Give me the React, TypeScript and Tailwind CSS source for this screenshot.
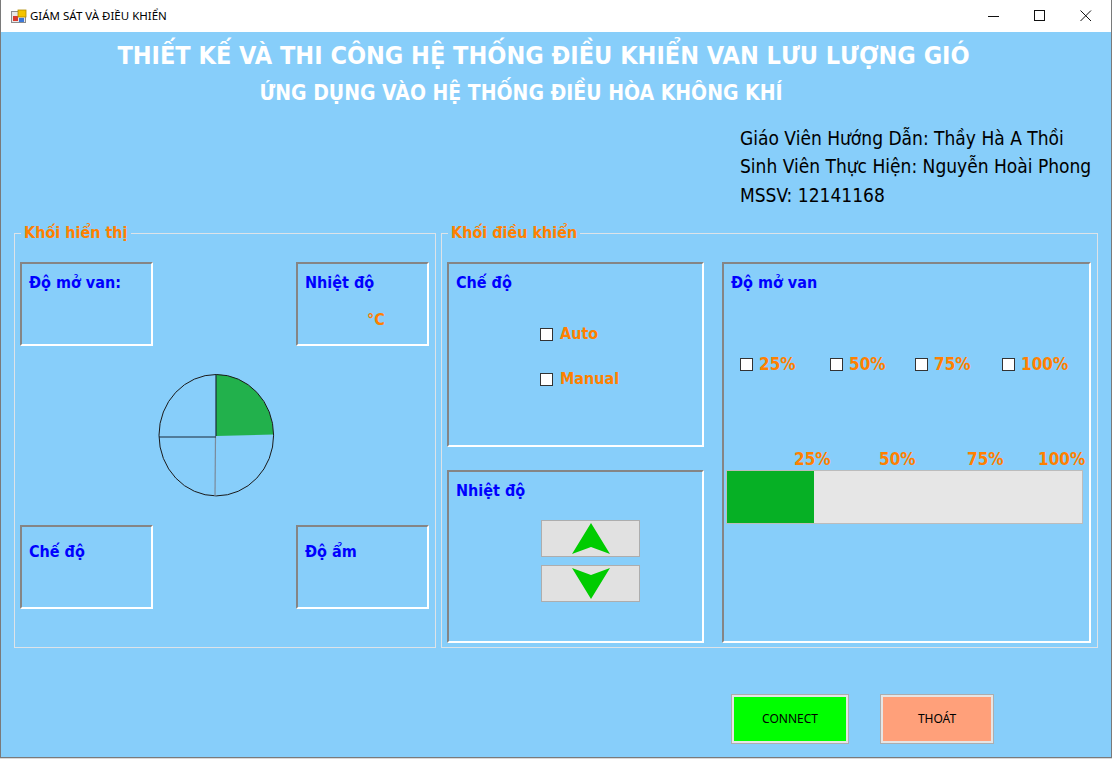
import React from "react";

const TF = "font-['DejaVu_Sans_Condensed','DejaVu_Sans',sans-serif]";

function Panel({ className = "", children }: { className?: string; children?: React.ReactNode }) {
  return (
    <div
      className={`border-2 border-t-[#858585] border-l-[#858585] border-r-white border-b-white ${className}`}
    >
      {children}
    </div>
  );
}

function Check() {
  return <div className="w-[13px] h-[13px] shrink-0 bg-white border border-[#333333]" />;
}

function BlueLabel({ children }: { children: React.ReactNode }) {
  return (
    <div className={`${TF} font-bold text-[16px] leading-[20px] text-[#0000ff] whitespace-nowrap`}>
      {children}
    </div>
  );
}

function Orange({ children, className = "" }: { children: React.ReactNode; className?: string }) {
  return (
    <span className={`${TF} font-bold text-[16px] leading-[20px] text-[#ff8000] whitespace-nowrap ${className}`}>
      {children}
    </span>
  );
}

function Pct({ children }: { children: React.ReactNode }) {
  return (
    <span className={`${TF} font-bold text-[17px] leading-[20px] text-[#ff8000] whitespace-nowrap`}>
      {children}
    </span>
  );
}

function GroupTitle({ children }: { children: React.ReactNode }) {
  return (
    <span
      className={`absolute left-[6px] top-[-11px] px-[3px] bg-[#87cefa] ${TF} font-bold text-[16px] leading-[20px] text-[#ff8000] whitespace-nowrap`}
    >
      {children}
    </span>
  );
}

export default function App() {
  return (
    <div className="w-[1112px] h-[759px] bg-[#d9d9d9] overflow-hidden">
      <div className="w-[1112px] h-[758px] flex flex-col border-x border-b border-[#7a7a7a]">
        {/* Title bar */}
        <div className="h-[32px] shrink-0 bg-white flex items-center">
          <svg className="ml-[10px]" width="16" height="16" viewBox="0 0 16 16">
            <rect x="0.5" y="3.5" width="14" height="11" fill="#e8e8e8" stroke="#8c8c8c" />
            <rect x="2" y="8" width="5" height="5" fill="#d83a2e" />
            <rect x="7" y="2" width="8" height="7" fill="#f5c400" stroke="#b08b00" strokeWidth="0.8" />
            <rect x="8" y="10" width="5" height="4" fill="#3c78d8" />
          </svg>
          <span className="ml-[3px] font-['Noto_Sans',sans-serif] text-[11.5px] text-black whitespace-nowrap">
            GIÁM SÁT VÀ ĐIỀU KHIỂN
          </span>
          <div className="ml-auto flex items-center">
            <div className="w-[46px] h-[32px] flex items-center justify-center">
              <svg width="12" height="12" viewBox="0 0 12 12">
                <line x1="0" y1="6.5" x2="11" y2="6.5" stroke="#111" strokeWidth="1" />
              </svg>
            </div>
            <div className="w-[46px] h-[32px] flex items-center justify-center">
              <svg width="12" height="12" viewBox="0 0 12 12">
                <rect x="0.5" y="0.5" width="10" height="10" fill="none" stroke="#111" strokeWidth="1" />
              </svg>
            </div>
            <div className="w-[46px] h-[32px] flex items-center justify-center mr-[2px]">
              <svg width="12" height="12" viewBox="0 0 12 12">
                <path d="M0.5 0.5 L11 11 M11 0.5 L0.5 11" stroke="#111" strokeWidth="1" />
              </svg>
            </div>
          </div>
        </div>

        {/* Body */}
        <div className="flex-1 bg-[#87cefa] flex flex-col">
          <div className={`mt-[8px] w-[1085px] h-[32px] leading-[32px] text-center ${TF} font-bold text-[25px] text-white whitespace-nowrap`}>
            THIẾT KẾ VÀ THI CÔNG HỆ THỐNG ĐIỀU KHIỂN VAN LƯU LƯỢNG GIÓ
          </div>
          <div className={`mt-[7px] w-[1040px] h-[28px] leading-[28px] text-center ${TF} font-bold text-[21px] text-white whitespace-nowrap`}>
            ỨNG DỤNG VÀO HỆ THỐNG ĐIỀU HÒA KHÔNG KHÍ
          </div>

          <div className={`mt-[17px] ml-[739px] ${TF} text-[19px] text-black whitespace-nowrap`}>
            <div className="leading-[28px]">{"Giáo Viên Hướng Dẫn: Thầy Hà A Th\u1ED3i"}</div>
            <div className="leading-[29px]">Sinh Viên Thực Hiện: Nguyễn Hoài Phong</div>
            <div className="leading-[28px]">MSSV: 12141168</div>
          </div>

          {/* Groups */}
          <div className="mt-[24px] flex">
            {/* Group 1 */}
            <div className="relative ml-[13px] w-[422px] h-[415px] border border-[#dde3e8] pl-[5px] pr-[6px] pt-[28px]">
              <GroupTitle>Khối hiển thị</GroupTitle>
              <div className="flex justify-between">
                <Panel className="w-[133px] h-[84px] pl-[7px] pt-[9px]">
                  <BlueLabel>Độ mở van:</BlueLabel>
                </Panel>
                <Panel className="w-[133px] h-[84px] pl-[7px] pt-[9px]">
                  <BlueLabel>Nhiệt độ</BlueLabel>
                  <div className="mt-[14px] ml-[62px]">
                    <Orange>°C</Orange>
                  </div>
                </Panel>
              </div>
              <svg className="block mt-[27px] ml-[137px]" width="120" height="124" viewBox="0 0 120 124">
                <path d="M59 63 L59 1.5 A57.3 60.7 0 0 1 116.3 61.5 Z" fill="#22b14c" />
                <ellipse cx="59.3" cy="62.2" rx="57.3" ry="60.7" fill="none" stroke="#1a1a1a" strokeWidth="1" />
                <line x1="59" y1="1.5" x2="59" y2="63" stroke="#1a2a3a" strokeWidth="1.2" />
                <line x1="58.5" y1="63" x2="58" y2="123" stroke="#7a8a9a" strokeWidth="1.2" />
                <line x1="2" y1="64" x2="59" y2="64" stroke="#1a2a3a" strokeWidth="1.2" />
              </svg>
              <div className="mt-[28px] flex justify-between">
                <Panel className="w-[133px] h-[84px] pl-[7px] pt-[15px]">
                  <BlueLabel>Chế độ</BlueLabel>
                </Panel>
                <Panel className="w-[133px] h-[84px] pl-[7px] pt-[15px]">
                  <BlueLabel>Độ ẩm</BlueLabel>
                </Panel>
              </div>
            </div>

            {/* Group 2 */}
            <div className="relative ml-[5px] w-[657px] h-[415px] border border-[#dde3e8] pl-[5px] pt-[28px] flex gap-[18px]">
              <GroupTitle>Khối điều khiển</GroupTitle>
              <div className="w-[257px] flex flex-col gap-[23px]">
                <Panel className="h-[185px] pl-[7px] pt-[9px]">
                  <BlueLabel>Chế độ</BlueLabel>
                  <div className="mt-[31px] ml-[84px] h-[20px] flex items-center gap-[7px]">
                    <Check />
                    <Orange>Auto</Orange>
                  </div>
                  <div className="mt-[25px] ml-[84px] h-[20px] flex items-center gap-[7px]">
                    <Check />
                    <Orange>Manual</Orange>
                  </div>
                </Panel>
                <Panel className="h-[173px] pl-[7px] pt-[9px]">
                  <BlueLabel>Nhiệt độ</BlueLabel>
                  <div className="mt-[19px] ml-[85px] w-[99px] h-[37px] bg-[#e1e1e1] border border-[#adadad]">
                    <svg className="block" width="97" height="35" viewBox="0 0 97 35">
                      <polygon points="49,2 68,33 49,26 30,33" fill="#00cc00" />
                    </svg>
                  </div>
                  <div className="mt-[8px] ml-[85px] w-[99px] h-[37px] bg-[#e1e1e1] border border-[#adadad]">
                    <svg className="block" width="97" height="35" viewBox="0 0 97 35">
                      <polygon points="30,2 49,9 68,2 49,33" fill="#00cc00" />
                    </svg>
                  </div>
                </Panel>
              </div>

              <Panel className="w-[369px] h-[381px] pt-[9px]">
                <div className="pl-[7px]">
                  <BlueLabel>Độ mở van</BlueLabel>
                </div>
                <div className="mt-[61px] ml-[16px] h-[20px] flex items-center">
                  <div className="w-[90px] flex items-center gap-[6px]">
                    <Check />
                    <Pct>25%</Pct>
                  </div>
                  <div className="w-[85px] flex items-center gap-[6px]">
                    <Check />
                    <Pct>50%</Pct>
                  </div>
                  <div className="w-[87px] flex items-center gap-[6px]">
                    <Check />
                    <Pct>75%</Pct>
                  </div>
                  <div className="flex items-center gap-[6px]">
                    <Check />
                    <Pct>100%</Pct>
                  </div>
                </div>
                <div className="mt-[73px] ml-[70px] h-[20px] flex">
                  <div className="w-[85px]">
                    <Pct>25%</Pct>
                  </div>
                  <div className="w-[88px]">
                    <Pct>50%</Pct>
                  </div>
                  <div className="w-[71px]">
                    <Pct>75%</Pct>
                  </div>
                  <div>
                    <Pct>100%</Pct>
                  </div>
                </div>
                <div className="mt-[3px] ml-[2px] w-[357px] h-[54px] bg-[#e6e6e6] border border-[#bcbcbc]">
                  <div className="h-full w-[87px] bg-[#06b025]" />
                </div>
              </Panel>
            </div>
          </div>

          {/* Buttons */}
          <div className="mt-[46px] flex">
            <div className="ml-[730px] w-[118px] h-[50px] border border-[#adadad] p-[2px] bg-[#e5e5e5]">
              <div className="w-full h-full bg-[#00ff00] flex items-center justify-center font-['Noto_Sans',sans-serif] text-[12px] text-black">
                CONNECT
              </div>
            </div>
            <div className="ml-[31px] w-[114px] h-[50px] border border-[#adadad] p-[2px] bg-[#e5e5e5]">
              <div className="w-full h-full bg-[#ffa07a] flex items-center justify-center font-['Noto_Sans',sans-serif] text-[12px] text-black">
                THOÁT
              </div>
            </div>
          </div>
        </div>
      </div>
    </div>
  );
}
